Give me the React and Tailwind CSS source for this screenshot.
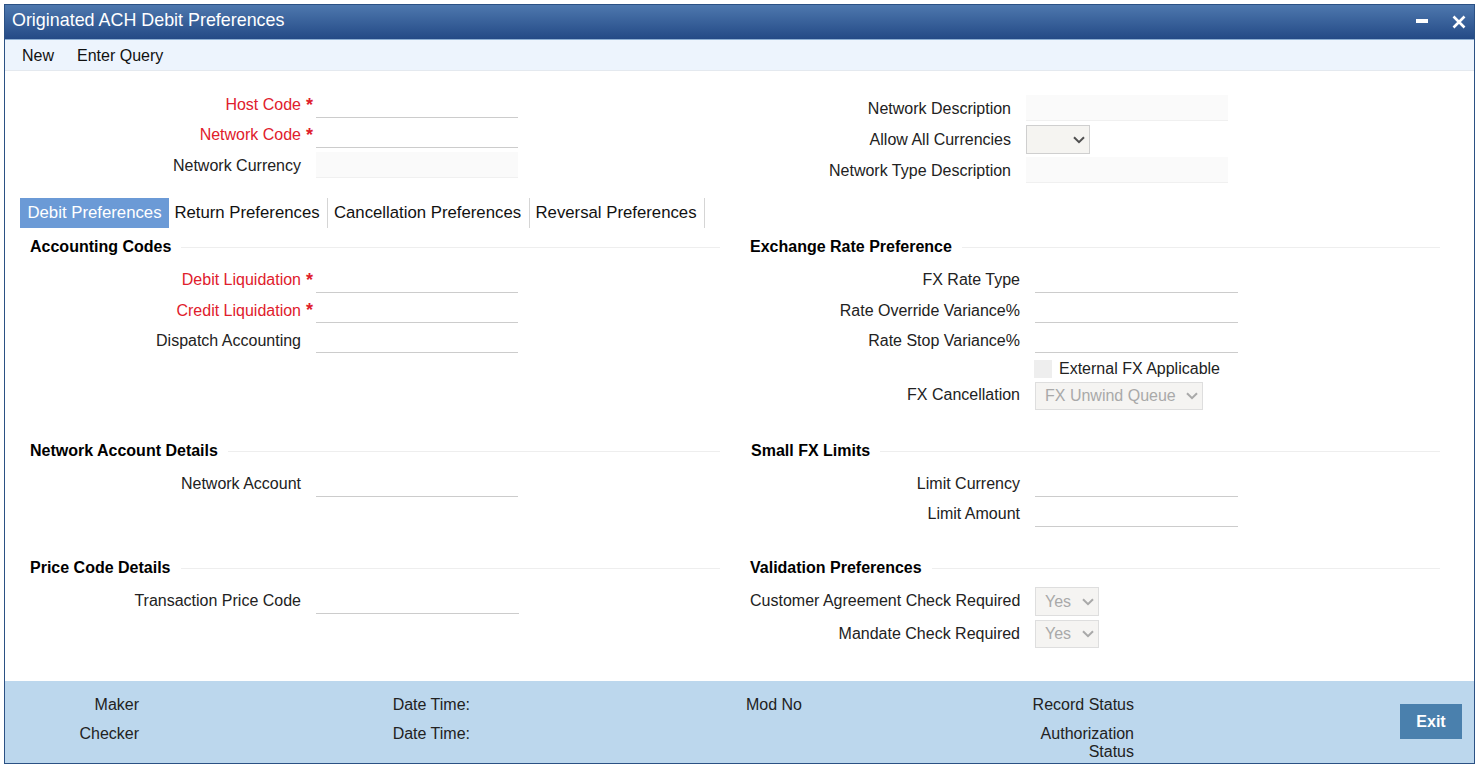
import React from 'react';

function Chevron({ className }) {
    return (
        <svg viewBox="0 0 12 8" className={`absolute top-1/2 -translate-y-1/2 w-[12px] h-[8px] pointer-events-none ${className}`} fill="none">
            <path d="M1 1.2 L6 6.2 L11 1.2" stroke="currentColor" strokeWidth="2" />
        </svg>
    );
}

function Field({ label, required, labelWidth = 'w-[271px]', labelClass = '', children, className = '' }) {
    return (
        <div className={`flex items-center ${className}`}>
            <label className={`${labelWidth} ${labelClass} whitespace-nowrap text-right ${required ? 'text-[#e0202c]' : ''}`}>{label}</label>
            <span className="w-[15px] pl-[5px] pb-[1px] text-[18px] text-[#e0202c] font-bold leading-none">{required ? '*' : ''}</span>
            {children}
        </div>
    );
}

function TextInput({ readOnly, width = 'w-[203px]' }) {
    return (
        <input
            type="text"
            readOnly={readOnly}
            className={`${width} h-[26px] outline-none border-b ${readOnly ? 'bg-[#fafafa] border-[#f0f0f0]' : 'border-[#cccccc]'}`}
        />
    );
}

function Select({ value, width, active }) {
    return (
        <div className={`relative ${width}`}>
            <select
                disabled={!active}
                defaultValue={value}
                className={`appearance-none w-full h-full pl-[9px] border outline-none opacity-100 ${active ? 'bg-[#f5f4f1] border-[#cfcfcf]' : 'bg-[#f5f4f2] border-[#dedede] text-[#a9a9a9]'}`}
            >
                <option>{value}</option>
            </select>
            <Chevron className={active ? 'right-[5px] text-[#505050]' : 'right-[5px] text-[#a9a9a9]'} />
        </div>
    );
}

function SectionTitle({ title, className = '' }) {
    return (
        <div className={`flex items-center gap-[10px] h-[20px] ${className}`}>
            <h3 className="pt-[2px] font-bold text-black">{title}</h3>
            <div className="flex-1 h-px mt-[2px] bg-[#eeeeee]" />
        </div>
    );
}

const tabs = [
    { name: 'Debit Preferences', width: 'w-[149px]', active: true },
    { name: 'Return Preferences', width: 'w-[159px]' },
    { name: 'Cancellation Preferences', width: 'w-[202px]' },
    { name: 'Reversal Preferences', width: 'w-[175px]' },
];

export default function App() {
    return (
        <div className="w-[1481px] h-[765px] overflow-hidden bg-white pl-[4px] pt-[4px] font-['Liberation_Sans',Arial,sans-serif] text-[16px] text-[#222222]">
            <div className="w-[1471px] h-[760px] flex flex-col border border-[#2b5184]">
                <header className="h-[35px] shrink-0 flex items-center justify-between bg-gradient-to-b from-[#4e78ae] to-[#244a86] pl-[7px] pr-[8px] border-b border-[#8fb0d3]">
                    <h1 className="pb-[4px] text-[17.9px] text-white">Originated ACH Debit Preferences</h1>
                    <div className="flex items-center gap-[24px]">
                        <svg viewBox="0 0 12 4" className="w-[12px] h-[4px] mb-[2px]"><rect width="12" height="4" fill="#fff" /></svg>
                        <svg viewBox="0 0 14 14" className="w-[14px] h-[14px]"><path d="M1.5 1.5 L12.5 12.5 M12.5 1.5 L1.5 12.5" stroke="#fff" strokeWidth="2.6" /></svg>
                    </div>
                </header>

                <nav className="h-[31px] shrink-0 flex items-center bg-[#edf4fd] border-b border-[#e4e9ef] pl-[17px] pt-[2px] gap-[23px] text-[#111111]">
                    <span>New</span>
                    <span>Enter Query</span>
                </nav>

                <main className="flex-1 bg-white pt-[21px]">
                    <div className="flex h-[86px] mb-[20px] pl-[25px]">
                        <div className="w-[720px] flex flex-col gap-[4px]">
                            <Field label="Host Code" required><TextInput width="w-[202px]" /></Field>
                            <Field label="Network Code" required><TextInput width="w-[202px]" /></Field>
                            <Field label="Network Currency" labelClass="pt-[2px]"><TextInput readOnly width="w-[202px]" /></Field>
                        </div>
                        <div className="flex flex-col pt-[3px]">
                            <Field label="Network Description" labelWidth="w-[261px]" labelClass="pt-[2px]"><TextInput readOnly width="w-[202px]" /></Field>
                            <Field label="Allow All Currencies" labelWidth="w-[261px]" className="mt-[4px]">
                                <Select value="" width="w-[64px] h-[29px]" active />
                            </Field>
                            <Field label="Network Type Description" labelWidth="w-[261px]" labelClass="pt-[2px]" className="mt-[3px]"><TextInput readOnly width="w-[202px]" /></Field>
                        </div>
                    </div>

                    <div className="flex h-[30px] ml-[15px]">
                        {tabs.map((tab) => (
                            <div
                                key={tab.name}
                                className={`${tab.width} flex items-center justify-center text-[16.75px] ${tab.active ? 'bg-[#6b9ad6] text-white' : 'pr-[2px] border-r border-[#d5d5d5] text-[#111111]'}`}
                            >
                                {tab.name}
                            </div>
                        ))}
                    </div>

                    <div className="grid grid-cols-[690px_690px] grid-rows-[204px_117px_auto] gap-x-[30px] ml-[25px] mt-[8px]">
                        <section>
                            <SectionTitle title="Accounting Codes" />
                            <div className="flex flex-col gap-[4px] mt-[11px]">
                                <Field label="Debit Liquidation" required><TextInput width="w-[202px]" /></Field>
                                <Field label="Credit Liquidation" required labelClass="pt-[2px]"><TextInput width="w-[202px]" /></Field>
                                <Field label="Dispatch Accounting" labelClass="pt-[2px]"><TextInput width="w-[202px]" /></Field>
                            </div>
                        </section>
                        <section>
                            <SectionTitle title="Exchange Rate Preference" />
                            <div className="flex flex-col gap-[4px] mt-[11px]">
                                <Field label="FX Rate Type" labelWidth="w-[270px]"><TextInput /></Field>
                                <Field label="Rate Override Variance%" labelWidth="w-[270px]" labelClass="pt-[2px]"><TextInput /></Field>
                                <Field label="Rate Stop Variance%" labelWidth="w-[270px]" labelClass="pt-[2px]"><TextInput /></Field>
                            </div>
                            <div className="flex items-center h-[18px] mt-[7px] ml-[284px]">
                                <input type="checkbox" disabled className="appearance-none w-[18px] h-[18px] bg-[#eeeeee]" />
                                <span className="ml-[7px]">External FX Applicable</span>
                            </div>
                            <Field label="FX Cancellation" labelWidth="w-[270px]" labelClass="pb-[2px]" className="mt-[4px]">
                                <Select value="FX Unwind Queue" width="w-[168px] h-[28px]" />
                            </Field>
                        </section>

                        <section>
                            <SectionTitle title="Network Account Details" />
                            <div className="mt-[11px]">
                                <Field label="Network Account"><TextInput width="w-[202px]" /></Field>
                            </div>
                        </section>
                        <section>
                            <SectionTitle title="Small FX Limits" className="pl-[1px]" />
                            <div className="flex flex-col gap-[4px] mt-[11px]">
                                <Field label="Limit Currency" labelWidth="w-[270px]"><TextInput /></Field>
                                <Field label="Limit Amount" labelWidth="w-[270px]"><TextInput /></Field>
                            </div>
                        </section>

                        <section>
                            <SectionTitle title="Price Code Details" />
                            <div className="mt-[11px]">
                                <Field label="Transaction Price Code"><TextInput width="w-[203px]" /></Field>
                            </div>
                        </section>
                        <section>
                            <SectionTitle title="Validation Preferences" />
                            <div className="flex flex-col gap-[4px] mt-[10px]">
                                <Field label="Customer Agreement Check Required" labelWidth="w-[270px]" labelClass="pb-[2px]">
                                    <Select value="Yes" width="w-[64px] h-[29px]" />
                                </Field>
                                <Field label="Mandate Check Required" labelWidth="w-[270px]">
                                    <Select value="Yes" width="w-[64px] h-[28px]" />
                                </Field>
                            </div>
                        </section>
                    </div>
                </main>

                <footer className="h-[82px] shrink-0 flex bg-[#bcd7ed] pt-[15px] text-right text-[#222222]">
                    <div className="w-[134px] flex flex-col gap-[11px] leading-[18px]">
                        <span>Maker</span>
                        <span>Checker</span>
                    </div>
                    <div className="w-[331px] flex flex-col gap-[11px] leading-[18px]">
                        <span>Date Time:</span>
                        <span>Date Time:</span>
                    </div>
                    <div className="w-[332px] leading-[18px]">Mod No</div>
                    <div className="w-[332px] flex flex-col gap-[11px] leading-[18px]">
                        <span>Record Status</span>
                        <span>Authorization<br />Status</span>
                    </div>
                    <button className="ml-[266px] mt-[8px] w-[62px] h-[35px] bg-[#4a80ad] text-white font-bold">Exit</button>
                </footer>
            </div>
        </div>
    );
}
